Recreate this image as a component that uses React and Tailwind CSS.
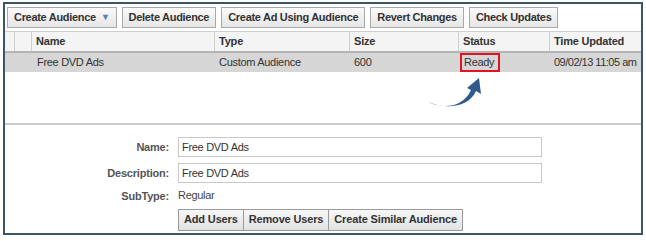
import React from 'react'

const font = { fontFamily: 'Tahoma, "Liberation Sans", "DejaVu Sans", sans-serif' }

function ToolButton({ children, caret }) {
  return (
    <div className="h-[21px] px-[6px] flex items-center gap-[5px] border border-[#a9a9a9] bg-gradient-to-b from-[#fafafa] to-[#e6e6e6] text-[11px] font-bold tracking-[-0.3px] text-[#333] whitespace-nowrap">
      {children}
      {caret && <span className="text-[#5a7fa8] text-[9px] leading-none">▼</span>}
    </div>
  )
}

function FormRow({ label, children }) {
  return (
    <div className="flex items-center">
      <div className="w-[166px] pr-[2px] text-right text-[11px] font-bold tracking-[-0.2px] text-[#555]">{label}</div>
      <div className="ml-[7px]">{children}</div>
    </div>
  )
}

function GroupButton({ children, first }) {
  return (
    <div
      className={
        first
          ? 'h-[22px] px-[5px] flex items-center border border-[#9a9a9a] bg-gradient-to-b from-[#f7f7f7] to-[#e2e2e2] text-[11px] font-bold tracking-[-0.15px] text-[#333]'
          : 'h-[22px] px-[5px] flex items-center border border-l-0 border-[#9a9a9a] bg-gradient-to-b from-[#f7f7f7] to-[#e2e2e2] text-[11px] font-bold tracking-[-0.15px] text-[#333]'
      }
    >
      {children}
    </div>
  )
}

export default function App() {
  return (
    <div className="w-[646px] h-[241px] bg-white pt-[2px] pl-[3px]" style={font}>
      <div className="relative w-[640px] h-[233px] border-2 border-[#3d5667] flex flex-col">
        {/* toolbar */}
        <div className="flex gap-[5px] pl-[2px] pt-[3px] h-[25px]">
          <ToolButton caret>Create Audience</ToolButton>
          <ToolButton>Delete Audience</ToolButton>
          <ToolButton>Create Ad Using Audience</ToolButton>
          <ToolButton>Revert Changes</ToolButton>
          <ToolButton>Check Updates</ToolButton>
        </div>

        {/* grid */}
        <div className="mt-[2px] border-t border-[#cfcfcf]">
          <div className="flex h-[21px] bg-[#f4f4f4] border-b-2 border-[#b4b4b4] text-[11px] font-bold tracking-[-0.2px] text-[#333]">
            <div className="w-[10px] border-r border-[#cfcfcf]" />
            <div className="w-[17px] border-r border-[#cfcfcf]" />
            <div className="w-[183px] border-r border-[#cfcfcf] pl-[4px] flex items-center">Name</div>
            <div className="w-[135px] border-r border-[#cfcfcf] pl-[4px] flex items-center">Type</div>
            <div className="w-[109px] border-r border-[#cfcfcf] pl-[4px] flex items-center">Size</div>
            <div className="w-[91px] border-r border-[#cfcfcf] pl-[4px] flex items-center">Status</div>
            <div className="flex-1 pl-[4px] flex items-center whitespace-nowrap">Time Updated</div>
          </div>
          <div className="flex h-[19px] bg-[#d6d6d6] text-[11px] tracking-[-0.3px] text-[#333]">
            <div className="w-[27px]" />
            <div className="w-[183px] pl-[5px] flex items-center">Free DVD Ads</div>
            <div className="w-[135px] pl-[4px] flex items-center">Custom Audience</div>
            <div className="w-[109px] pl-[4px] flex items-center">600</div>
            <div className="w-[91px] flex items-center">
              <span className="ml-[1px] h-[19px] w-[40px] border-2 border-[#e0141e] pl-[2px] flex items-center">Ready</span>
            </div>
            <div className="flex-1 pl-[4px] flex items-center whitespace-nowrap tracking-[-0.5px]">09/02/13 11:05 am</div>
          </div>
        </div>

        <svg className="absolute left-[418px] top-[70px]" width="64" height="38" viewBox="0 0 64 38">
          <path
            d="M5 28 C 20 35, 40 34, 48 16 L 44 14 L 56 4 L 58 20 L 53 17 C 46 33, 24 36, 5 28 Z"
            fill="#2f5b8a"
          />
        </svg>

        <div className="mt-[51px] border-t-2 border-[#cacaca]" />

        {/* form */}
        <div className="flex flex-col pt-[12px]">
          <FormRow label="Name:">
            <div className="w-[364px] h-[20px] border border-[#c9c9c9] pl-[3px] flex items-center text-[11px] tracking-[-0.3px] text-[#333]">Free DVD Ads</div>
          </FormRow>
          <div className="h-[6px]" />
          <FormRow label="Description:">
            <div className="w-[364px] h-[20px] border border-[#c9c9c9] pl-[3px] flex items-center text-[11px] tracking-[-0.3px] text-[#333]">Free DVD Ads</div>
          </FormRow>
          <div className="h-[5px]" />
          <FormRow label="SubType:">
            <div className="text-[11px] tracking-[-0.3px] text-[#444] -mt-[3px]">Regular</div>
          </FormRow>
          <div className="flex mt-[4px] ml-[173px]">
            <GroupButton first>Add Users</GroupButton>
            <GroupButton>Remove Users</GroupButton>
            <GroupButton>Create Similar Audience</GroupButton>
          </div>
        </div>
      </div>
    </div>
  )
}
